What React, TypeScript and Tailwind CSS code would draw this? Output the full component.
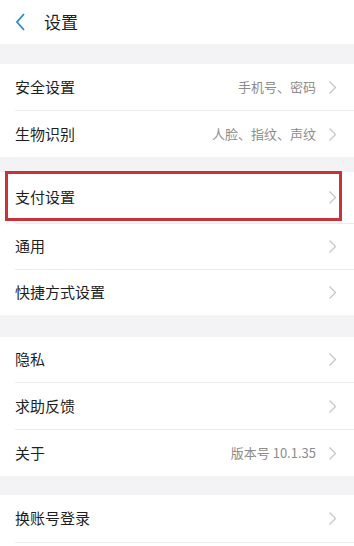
import type { ReactNode } from 'react';

const font = { fontFamily: '"Noto Sans CJK SC", "Noto Sans", sans-serif' };

function Chevron() {
  return (
    <svg width="9" height="15" viewBox="0 0 9 15" className="shrink-0">
      <polyline points="1.5,1.5 7.5,7.5 1.5,13.5" fill="none" stroke="#c4c4c4" strokeWidth="1.2" />
    </svg>
  );
}

function Row({ label, value, h, children }: { label: string; value?: string; h: string; children?: ReactNode }) {
  return (
    <div className={`relative flex items-center pl-[15px] pr-[17px] bg-white ${h}`}>
      <span className="flex-1 text-[15px] text-[#1f1f1f]">{label}</span>
      {value && <span className="mr-[12px] text-[13px] text-[#8c8c8c]">{value}</span>}
      <Chevron />
      {children}
    </div>
  );
}

function Divider() {
  return (
    <div className="bg-white">
      <div className="ml-[15px] h-px bg-[#ececec]" />
    </div>
  );
}

export default function App() {
  return (
    <div className="w-[354px] h-[546px] overflow-hidden bg-[#f3f3f6]" style={font}>
      <div className="flex items-center h-[44px] bg-white">
        <svg width="12" height="20" viewBox="0 0 12 20" className="ml-[15px]">
          <polyline points="9,2 2,10 9,18" fill="none" stroke="#2a8bc2" strokeWidth="1.8" />
        </svg>
        <span className="ml-[17px] text-[17px] text-[#1f1f1f]">设置</span>
      </div>

      <div className="h-[20px]" />
      <Row label="安全设置" value="手机号、密码" h="h-[46px]" />
      <Divider />
      <Row label="生物识别" value="人脸、指纹、声纹" h="h-[46px]" />

      <div className="h-[15px]" />
      <Row label="支付设置" h="h-[51px]">
        <div className="absolute left-[5px] right-[12px] -top-[1px] bottom-[2px] border-[3px] border-[#c8323a]" />
      </Row>
      <Divider />
      <Row label="通用" h="h-[45px]" />
      <Divider />
      <Row label="快捷方式设置" h="h-[45px]" />

      <div className="h-[22px]" />
      <Row label="隐私" h="h-[45px]" />
      <Divider />
      <Row label="求助反馈" h="h-[46px]" />
      <Divider />
      <Row label="关于" value="版本号 10.1.35" h="h-[46px]" />

      <div className="h-[19px]" />
      <Row label="换账号登录" h="h-[47px]" />
      <Divider />
      <div className="h-[10px] bg-white" />
    </div>
  );
}
